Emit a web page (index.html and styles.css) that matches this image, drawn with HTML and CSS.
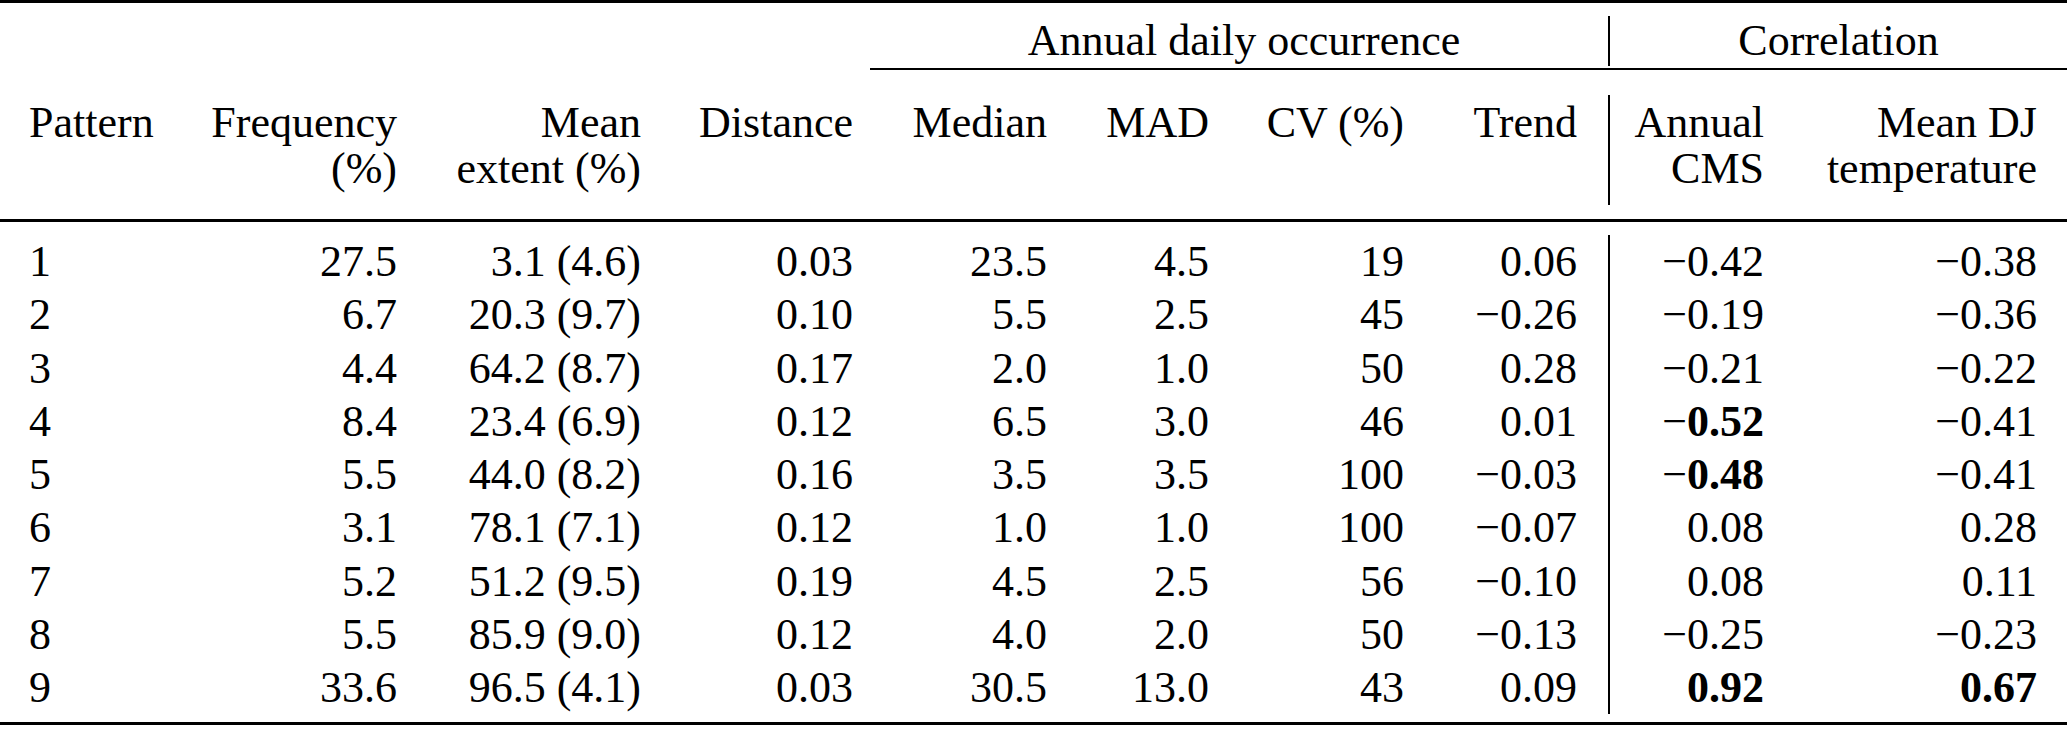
FILE: index.html
```html
<!DOCTYPE html>
<html lang="en">
<head>
<meta charset="utf-8">
<title>Pattern statistics table</title>
<link rel="stylesheet" href="styles.css">
</head>
<body>
<div class="tbl">
  <div class="rule rule-top"></div>

  <div class="cell rowa blank-a"></div>
  <div class="cell rowa group-ado">Annual daily occurrence</div>
  <div class="cell rowa group-corr vr">Correlation</div>

  <div class="rule rule-cmid"></div>

  <div class="cell head c1">Pattern</div>
  <div class="cell head r">Frequency<br>(%)</div>
  <div class="cell head r">Mean<br>extent (%)</div>
  <div class="cell head r">Distance</div>
  <div class="cell head r">Median</div>
  <div class="cell head r">MAD</div>
  <div class="cell head r">CV (%)</div>
  <div class="cell head r c8">Trend</div>
  <div class="cell head r vr">Annual<br>CMS</div>
  <div class="cell head r c10">Mean DJ<br>temperature</div>

  <div class="rule rule-mid"></div>

  <div class="cell d c1">1</div><div class="cell d r">27.5</div><div class="cell d r">3.1 (4.6)</div><div class="cell d r">0.03</div><div class="cell d r">23.5</div><div class="cell d r">4.5</div><div class="cell d r">19</div><div class="cell d r c8">0.06</div><div class="cell d r vr">−0.42</div><div class="cell d r c10">−0.38</div>
  <div class="cell d c1">2</div><div class="cell d r">6.7</div><div class="cell d r">20.3 (9.7)</div><div class="cell d r">0.10</div><div class="cell d r">5.5</div><div class="cell d r">2.5</div><div class="cell d r">45</div><div class="cell d r c8">−0.26</div><div class="cell d r vr">−0.19</div><div class="cell d r c10">−0.36</div>
  <div class="cell d c1">3</div><div class="cell d r">4.4</div><div class="cell d r">64.2 (8.7)</div><div class="cell d r">0.17</div><div class="cell d r">2.0</div><div class="cell d r">1.0</div><div class="cell d r">50</div><div class="cell d r c8">0.28</div><div class="cell d r vr">−0.21</div><div class="cell d r c10">−0.22</div>
  <div class="cell d c1">4</div><div class="cell d r">8.4</div><div class="cell d r">23.4 (6.9)</div><div class="cell d r">0.12</div><div class="cell d r">6.5</div><div class="cell d r">3.0</div><div class="cell d r">46</div><div class="cell d r c8">0.01</div><div class="cell d r vr">−<b>0.52</b></div><div class="cell d r c10">−0.41</div>
  <div class="cell d c1">5</div><div class="cell d r">5.5</div><div class="cell d r">44.0 (8.2)</div><div class="cell d r">0.16</div><div class="cell d r">3.5</div><div class="cell d r">3.5</div><div class="cell d r">100</div><div class="cell d r c8">−0.03</div><div class="cell d r vr">−<b>0.48</b></div><div class="cell d r c10">−0.41</div>
  <div class="cell d c1">6</div><div class="cell d r">3.1</div><div class="cell d r">78.1 (7.1)</div><div class="cell d r">0.12</div><div class="cell d r">1.0</div><div class="cell d r">1.0</div><div class="cell d r">100</div><div class="cell d r c8">−0.07</div><div class="cell d r vr">0.08</div><div class="cell d r c10">0.28</div>
  <div class="cell d c1">7</div><div class="cell d r">5.2</div><div class="cell d r">51.2 (9.5)</div><div class="cell d r">0.19</div><div class="cell d r">4.5</div><div class="cell d r">2.5</div><div class="cell d r">56</div><div class="cell d r c8">−0.10</div><div class="cell d r vr">0.08</div><div class="cell d r c10">0.11</div>
  <div class="cell d c1">8</div><div class="cell d r">5.5</div><div class="cell d r">85.9 (9.0)</div><div class="cell d r">0.12</div><div class="cell d r">4.0</div><div class="cell d r">2.0</div><div class="cell d r">50</div><div class="cell d r c8">−0.13</div><div class="cell d r vr">−0.25</div><div class="cell d r c10">−0.23</div>
  <div class="cell d c1">9</div><div class="cell d r">33.6</div><div class="cell d r">96.5 (4.1)</div><div class="cell d r">0.03</div><div class="cell d r">30.5</div><div class="cell d r">13.0</div><div class="cell d r">43</div><div class="cell d r c8">0.09</div><div class="cell d r vr"><b>0.92</b></div><div class="cell d r c10"><b>0.67</b></div>

  <div class="rule rule-bottom"></div>
</div>
</body>
</html>
```

FILE: styles.css
```css
html, body {
  margin: 0;
  padding: 0;
  background: #ffffff;
}

body {
  font-family: "Liberation Serif", serif;
  font-size: 44px;
  color: #000000;
}

.tbl {
  display: grid;
  width: 2067px;
  font-family: "Liberation Serif", serif;
  grid-template-columns: 160px 237px 244px 212px 194px 162px 195px 204px 156px 303px;
}

.cell {
  box-sizing: border-box;
  white-space: nowrap;
}

.r {
  text-align: right;
}

.c1 {
  padding-left: 29px;
}

.c8 {
  padding-right: 31px;
}

.c10 {
  padding-right: 30px;
}

.vr {
  border-left: 2px solid #000000;
}

.rule {
  grid-column: 1 / -1;
  background: #000000;
}

.rule-top {
  height: 3px;
  margin-bottom: 13px;
}

.rule-cmid {
  grid-column: 5 / -1;
  height: 2px;
  margin: 2px 0 25px 17px;
}

.rule-mid {
  height: 3px;
  margin-top: 14px;
  margin-bottom: 13px;
}

.rule-bottom {
  height: 3px;
  margin-top: 8px;
}

.rowa {
  height: 50px;
  line-height: 50px;
}

.blank-a {
  grid-column: 1 / 5;
}

.group-ado {
  grid-column: 5 / 9;
  text-align: center;
  padding-left: 27px;
}

.group-corr {
  grid-column: 9 / 11;
  text-align: center;
}

.head {
  height: 110px;
  padding-top: 5px;
  line-height: 46px;
}

.d {
  height: 53.25px;
  line-height: 53.25px;
}

b {
  font-weight: bold;
}
```
